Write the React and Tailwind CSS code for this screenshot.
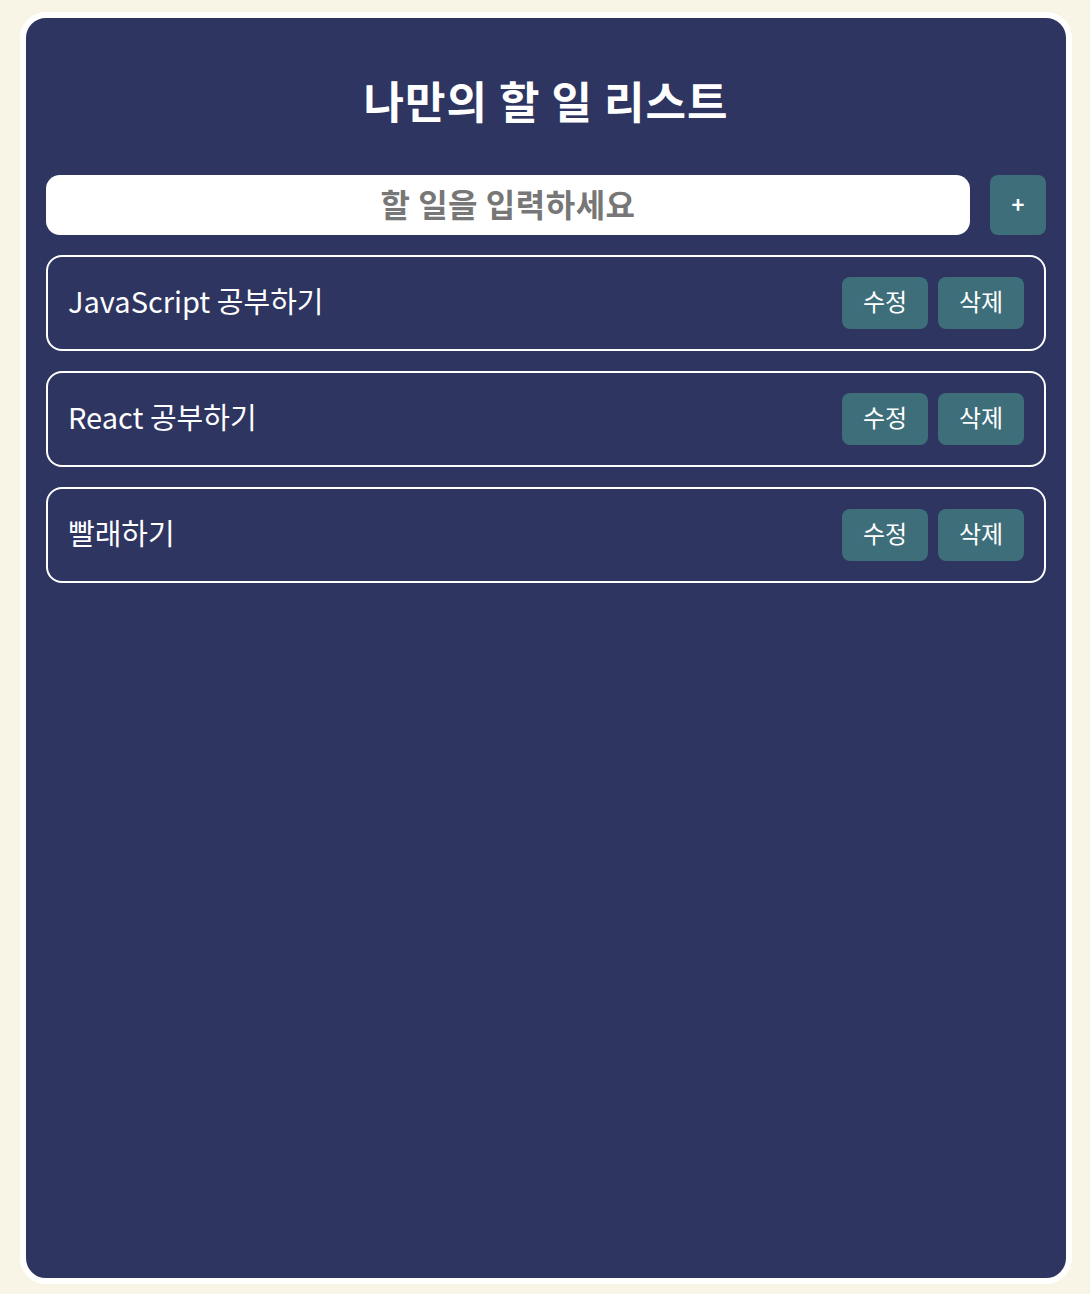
import { useState } from 'react';

const initialTodos = [
  { id: 1, text: 'JavaScript 공부하기' },
  { id: 2, text: 'React 공부하기' },
  { id: 3, text: '빨래하기' },
];

const font = { fontFamily: '"Noto Sans CJK KR", "Noto Sans", sans-serif' };

const App = () => {
  const [todos] = useState(initialTodos);
  const [value, setValue] = useState('');

  return (
    <div className="min-h-[1294px] bg-[#f8f5e6] pl-5 pr-[18px] pt-3 pb-[10px]" style={font}>
      <div className="h-[1272px] rounded-[26px] border-[6px] border-white bg-[#2e3561] px-5 pt-[52px]">
        <h1 className="text-center text-[44px] font-bold leading-[60px] tracking-[1px] text-white">나만의 할 일 리스트</h1>

        <div className="mt-[45px] flex gap-5">
          <input
            value={value}
            onChange={(e) => setValue(e.target.value)}
            placeholder="할 일을 입력하세요"
            className="h-[60px] flex-1 rounded-[14px] bg-white pb-1 text-center text-[32px] font-bold tracking-[0.5px] text-[#333] outline-none placeholder:text-[#777]"
          />
          <button className="h-[60px] w-[56px] rounded-lg bg-[#3d6e7a] pb-1 text-[22px] font-bold text-white">+</button>
        </div>

        <ul className="mt-5 flex flex-col gap-5">
          {todos.map((todo) => (
            <li key={todo.id} className="flex h-[96px] items-center justify-between rounded-2xl border-2 border-white px-5">
              <span className="pb-1 text-[29px] text-white">{todo.text}</span>
              <div className="flex gap-[10px]">
                <button className="h-[52px] w-[86px] rounded-lg bg-[#3d6e7a] pb-1 text-[24px] text-white">수정</button>
                <button className="h-[52px] w-[86px] rounded-lg bg-[#3d6e7a] pb-1 text-[24px] text-white">삭제</button>
              </div>
            </li>
          ))}
        </ul>
      </div>
    </div>
  );
};

export default App;
